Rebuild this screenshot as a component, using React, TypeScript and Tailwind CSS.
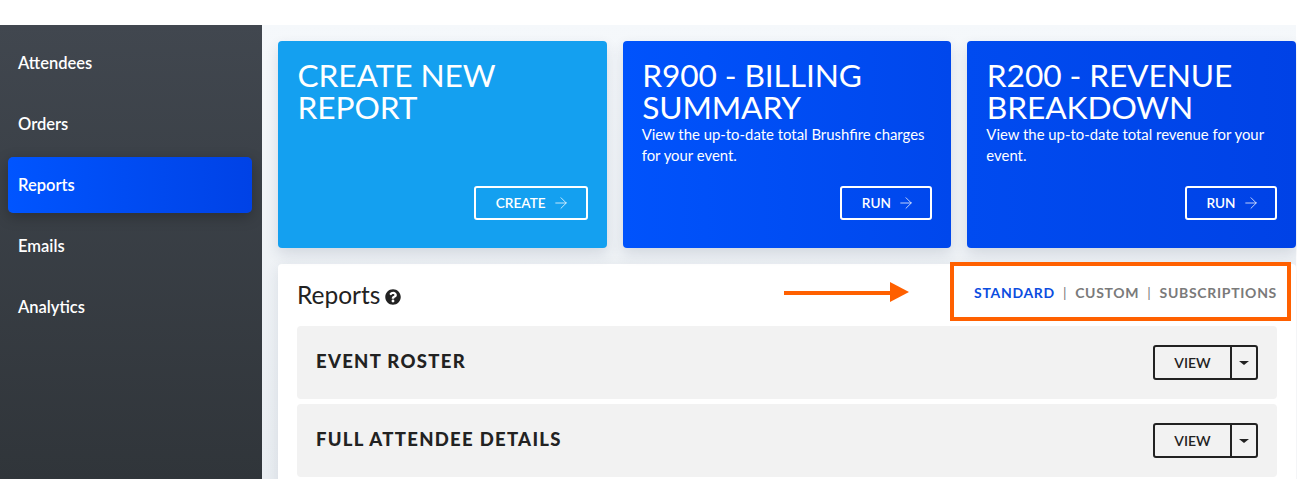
import { ArrowRight } from 'lucide-react';
import { FaQuestionCircle } from 'react-icons/fa';
import clsx from 'clsx';

const navItems = ['Attendees', 'Orders', 'Reports', 'Emails', 'Analytics'];

const cards = [
    { title: ['CREATE NEW', 'REPORT'], text: [], action: 'CREATE', bg: 'bg-[#14a0f0]', btn: 'w-[114px]' },
    {
        title: ['R900 - BILLING', 'SUMMARY'],
        text: ['View the up-to-date total Brushfire charges', 'for your event.'],
        action: 'RUN',
        bg: 'bg-gradient-to-r from-[#0053fc] to-[#0047ec]',
        btn: 'w-[92px]',
    },
    {
        title: ['R200 - REVENUE', 'BREAKDOWN'],
        text: ['View the up-to-date total revenue for your', 'event.'],
        action: 'RUN',
        bg: 'bg-gradient-to-r from-[#004bf0] to-[#0042e6]',
        btn: 'w-[92px]',
    },
];

const rows = ['EVENT ROSTER', 'FULL ATTENDEE DETAILS'];

export default function App() {
    return (
        <div className="relative h-[479px] w-[1297px] overflow-hidden bg-white font-['Lato',sans-serif]">
            <div className="h-[25px] bg-white" />
            <div className="flex h-[454px]">
                {/* Sidebar */}
                <aside className="w-[262px] shrink-0 bg-gradient-to-b from-[#41474f] to-[#30353a] pl-2 pr-[10px] pt-[10px]">
                    <nav className="flex flex-col gap-[5px]">
                        {navItems.map((item) => (
                            <div
                                key={item}
                                className={clsx(
                                    'flex h-[56px] items-center rounded-[5px] px-[10px] text-[16.5px] font-semibold text-white',
                                    item === 'Reports' &&
                                        'bg-gradient-to-r from-[#0055ff] to-[#0042e6] shadow-[0_4px_14px_rgba(0,0,0,0.25)]'
                                )}
                            >
                                {item}
                            </div>
                        ))}
                    </nav>
                </aside>

                {/* Main */}
                <main className="w-[1034px] bg-gradient-to-b from-[#f5f8fb] to-[#e9edf1] pl-4 pt-4">
                    <div className="flex gap-4">
                        {cards.map((card) => (
                            <div
                                key={card.action + card.title[0]}
                                className={clsx(
                                    'flex h-[207px] flex-1 flex-col rounded-[4px] pl-[19.5px] pr-[19px] pt-[19px] text-white shadow-[0_6px_14px_rgba(40,60,90,0.14)]',
                                    card.bg
                                )}
                            >
                                <div className="text-[31.7px] leading-[31.5px] tracking-[-0.1px]">
                                    {card.title.map((line) => (
                                        <div key={line}>{line}</div>
                                    ))}
                                </div>
                                <div className="mt-[1px] text-[14.9px] leading-[21px]">
                                    {card.text.map((line) => (
                                        <div key={line} className="-ml-[0.5px]">
                                            {line}
                                        </div>
                                    ))}
                                </div>
                                <div className="mt-auto mb-[28px] flex justify-end">
                                    <div
                                        className={clsx(
                                            'flex h-[34px] items-center justify-center gap-[6px] rounded-[3px] border-2 border-white pl-[4px] text-[13.6px] font-semibold',
                                            card.btn
                                        )}
                                    >
                                        {card.action}
                                        <ArrowRight size={18} strokeWidth={1} />
                                    </div>
                                </div>
                            </div>
                        ))}
                    </div>

                    {/* Reports panel */}
                    <section className="mt-4 h-[300px] rounded-[4px] bg-white pl-[19px] pr-[19px] shadow-[0_4px_14px_rgba(40,60,90,0.1)]">
                        <div className="flex h-[62px] items-center justify-between">
                            <div className="flex items-center gap-[5px] pt-[1px] text-[24.5px] leading-none text-[#222]">
                                Reports
                                <FaQuestionCircle size={16} className="mt-[3px] text-[#222]" />
                            </div>
                            <div className="-mt-[5px] flex items-center text-[14px] font-bold tracking-[0.7px] text-[#7a7a7a]">
                                <span className="text-[#0b4de0]">STANDARD</span>
                                <span className="mx-[8px] font-normal">|</span>
                                <span>CUSTOM</span>
                                <span className="mx-[8px] font-normal">|</span>
                                <span>SUBSCRIPTIONS</span>
                            </div>
                        </div>
                        <div className="flex flex-col gap-[5px]">
                            {rows.map((row) => (
                                <div
                                    key={row}
                                    className="flex h-[73px] items-center justify-between rounded-[4px] bg-[#f2f2f2] px-[19px]"
                                >
                                    <span className="-mt-[2px] text-[18.5px] font-black tracking-[1.3px] text-[#222]">{row}</span>
                                    <div className="flex h-[35px] w-[105px] items-center rounded-[3px] border-2 border-[#222]">
                                        <span className="flex flex-1 items-center justify-center text-[14px] font-semibold text-[#222]">
                                            VIEW
                                        </span>
                                        <span className="flex h-full w-[26px] items-center justify-center border-l-2 border-[#222]">
                                            <span className="h-0 w-0 border-x-[5px] border-t-[4px] border-x-transparent border-t-[#222]" />
                                        </span>
                                    </div>
                                </div>
                            ))}
                        </div>
                    </section>
                </main>
            </div>

            {/* Annotation overlay */}
            <div className="absolute left-[950px] top-[262px] h-[59px] w-[341px] border-4 border-[#ff6000]" />
            <svg className="absolute left-[784px] top-[282px]" width="126" height="21" viewBox="0 0 126 21">
                <rect x="0" y="9" width="106" height="4" fill="#ff6000" />
                <polygon points="106,0 125,10 106,20" fill="#ff6000" />
            </svg>
        </div>
    );
}
